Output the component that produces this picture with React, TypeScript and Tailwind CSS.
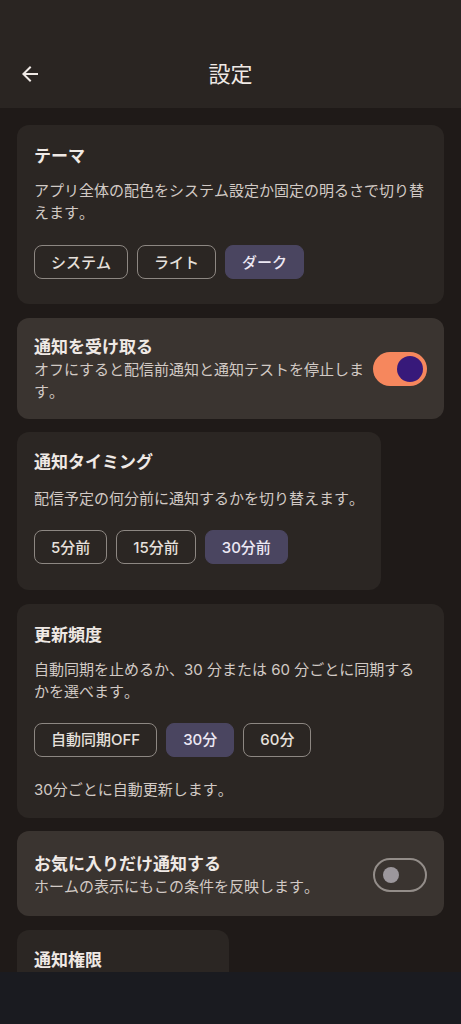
import React from "react"

const font = { fontFamily: 'Inter, "Noto Sans CJK JP", sans-serif' }

type ChipProps = { label: string; selected?: boolean }

const Chip = ({ label, selected }: ChipProps) => (
    <div
        className={`h-[34px] px-[16px] flex items-center rounded-[8px] text-[15px] font-medium leading-none ${selected
            ? "bg-[#4a4560] text-[#ece8f4] border border-[#4a4560]"
            : "border border-[#8d8782] text-[#e6e0dc]"
            }`}
    >
        {label}
    </div>
)

const Toggle = ({ on }: { on: boolean }) =>
    on ? (
        <div className="w-[54px] h-[34px] rounded-full bg-[#f6875d] flex items-center justify-end pr-[4px] shrink-0">
            <div className="w-[26px] h-[26px] rounded-full bg-[#37197a]" />
        </div>
    ) : (
        <div className="w-[54px] h-[34px] rounded-full border-2 border-[#938d89] flex items-center pl-[8px] shrink-0">
            <div className="w-[16px] h-[16px] rounded-full bg-[#9c979c]" />
        </div>
    )

const Title = ({ children }: { children: React.ReactNode }) => (
    <h2 className="text-[17px] font-bold leading-[24px] text-[#efe9e5]">{children}</h2>
)

const Desc = ({ children, className = "" }: { children: React.ReactNode; className?: string }) => (
    <p className={`text-[15px] leading-[22px] text-[#d2cac5] ${className}`}>{children}</p>
)

export default function App() {
    return (
        <div className="h-[1024px] w-[461px] flex flex-col bg-[#1f1a18] overflow-hidden [font-kerning:none]" style={font}>
            {/* top bar */}
            <header className="h-[108px] shrink-0 bg-[#2a2522] flex items-end pb-[22px]">
                <div className="w-full flex items-center h-[24px]">
                    <button className="ml-[18px] w-[24px] h-[24px] text-[#efe9e5]">
                        <svg viewBox="0 0 24 24" width="24" height="24" fill="currentColor">
                            <path d="M20 11H7.83l5.59-5.59L12 4l-8 8 8 8 1.41-1.41L7.83 13H20v-2z" />
                        </svg>
                    </button>
                    <h1 className="flex-1 text-center text-[22px] leading-none text-[#efe9e5] pr-[42px]">設定</h1>
                </div>
            </header>

            <main className="flex-1 overflow-hidden px-[17px] pt-[17px] flex flex-col gap-[13.5px]">
                {/* テーマ */}
                <section className="bg-[#2b2623] rounded-[12px] px-[17px] pt-[19px] pb-[25px]">
                    <Title>テーマ</Title>
                    <Desc className="mt-[12px]">アプリ全体の配色をシステム設定か固定の明るさで切り替えます。</Desc>
                    <div className="flex gap-[9px] mt-[21px]">
                        <Chip label="システム" />
                        <Chip label="ライト" />
                        <Chip label="ダーク" selected />
                    </div>
                </section>

                {/* 通知を受け取る */}
                <section className="bg-[#3a3430] rounded-[12px] pl-[17px] pr-[17px] pt-[17px] pb-[16px] flex items-center gap-[6px]">
                    <div className="flex-1">
                        <Title>通知を受け取る</Title>
                        <Desc>オフにすると配信前通知と通知テストを停止します。</Desc>
                    </div>
                    <Toggle on />
                </section>

                {/* 通知タイミング */}
                <section className="self-start bg-[#2b2623] rounded-[12px] px-[17px] pt-[18px] pb-[26px]">
                    <Title>通知タイミング</Title>
                    <Desc className="mt-[14px]">配信予定の何分前に通知するかを切り替えます。</Desc>
                    <div className="flex gap-[9px] mt-[20px]">
                        <Chip label="5分前" />
                        <Chip label="15分前" />
                        <Chip label="30分前" selected />
                    </div>
                </section>

                {/* 更新頻度 */}
                <section className="bg-[#2b2623] rounded-[12px] px-[17px] pt-[19px] pb-[17px]">
                    <Title>更新頻度</Title>
                    <Desc className="mt-[12px]">自動同期を止めるか、30 分または 60 分ごとに同期するかを選べます。</Desc>
                    <div className="flex gap-[9px] mt-[20px]">
                        <Chip label="自動同期OFF" />
                        <Chip label="30分" selected />
                        <Chip label="60分" />
                    </div>
                    <Desc className="mt-[22px]">30分ごとに自動更新します。</Desc>
                </section>

                {/* お気に入りだけ通知する */}
                <section className="bg-[#3a3430] rounded-[12px] px-[17px] pt-[21px] pb-[18px] flex items-center gap-[6px]">
                    <div className="flex-1">
                        <Title>お気に入りだけ通知する</Title>
                        <Desc>ホームの表示にもこの条件を反映します。</Desc>
                    </div>
                    <Toggle on={false} />
                </section>

                {/* 通知権限 */}
                <section className="w-[212px] min-h-[80px] shrink-0 bg-[#2b2623] rounded-[12px] px-[17px] pt-[18px]">
                    <Title>通知権限</Title>
                </section>
            </main>

            {/* system navigation bar */}
            <div className="h-[52px] shrink-0 bg-[#1a1b20]" />
        </div>
    )
}
